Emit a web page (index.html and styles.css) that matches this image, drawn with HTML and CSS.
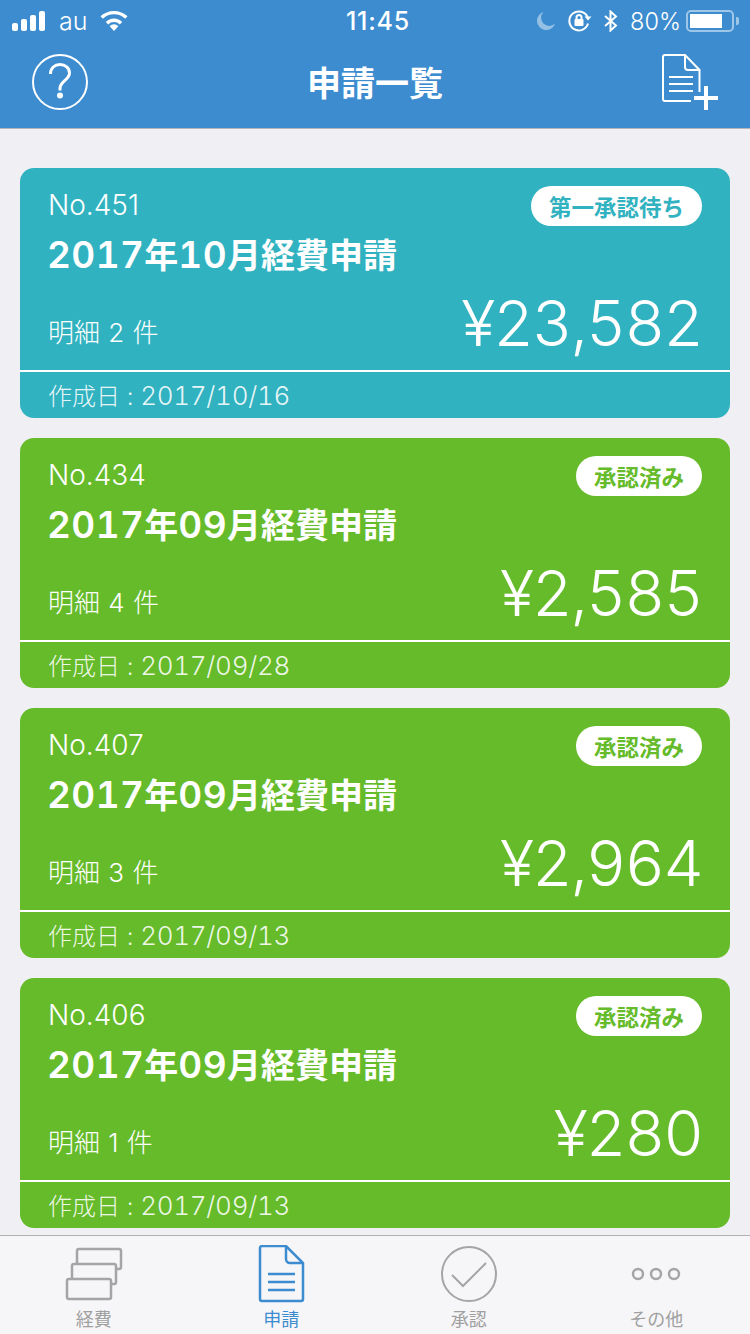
FILE: index.html
```html
<!DOCTYPE html>
<html lang="ja">
<head>
<meta charset="UTF-8">
<meta name="viewport" content="width=device-width, initial-scale=1.0">
<title>申請一覧</title>
<link rel="stylesheet" href="styles.css">
</head>
<body>

<div class="app">
  <header class="header">
    <div class="statusbar">
      <div class="status-left">
        <svg class="signal" width="34" height="20" viewBox="0 0 34 20">
          <rect x="0" y="12" width="6" height="8" rx="2"/>
          <rect x="9" y="8" width="6" height="12" rx="2"/>
          <rect x="18" y="4" width="6" height="16" rx="2"/>
          <rect x="27" y="0" width="6" height="20" rx="2"/>
        </svg>
        <span class="carrier">au</span>
        <svg class="wifi" width="28" height="20" viewBox="0 0 28 20">
          <path d="M14 20l-4.400-4.800a6.200 6.200 0 0 1 8.800 0z"/>
          <path d="M14 7.600c3.200 0 6.100 1.300 8.200 3.300l-2.400 2.500a8.400 8.400 0 0 0-11.600 0l-2.400-2.500c2.100-2 5-3.300 8.200-3.300z"/>
          <path d="M14 0c5.200 0 10 2 13.500 5.300l-2.400 2.500a16 16 0 0 0-22.200 0l-2.400-2.500c3.500-3.300 8.300-5.300 13.500-5.300z"/>
        </svg>
      </div>
      <div class="status-time">11:45</div>
      <div class="status-right">
        <svg class="moon" width="18" height="18" viewBox="0 0 18 18">
          <path d="M6.500 0a8 8 0 0 0 11.500 11.500a9.200 9.200 0 1 1-11.500-11.500z"/>
        </svg>
        <svg class="rotlock" width="24" height="22" viewBox="0 0 24 22">
          <path class="rot-arc" d="M20 13.500a9.500 9.500 0 1 1-.3-6"/>
          <path d="M23.500 6.500l-3.500 4-3.500-4z"/>
          <rect x="6.500" y="9" width="9" height="7" rx="1"/>
          <path class="rot-arc" d="M8.500 9v-1.500a2.500 2.500 0 0 1 5 0v1.500"/>
        </svg>
        <svg class="bluetooth" width="14" height="22" viewBox="0 0 14 22">
          <path d="M1 6l11 9.500-5.500 5v-19l5.500 5-11 9.500"/>
        </svg>
        <span class="battery-pct">80%</span>
        <div class="battery"><div class="battery-fill"></div></div>
        <div class="battery-nub"></div>
      </div>
    </div>

    <nav class="navbar">
      <svg class="nav-icon" width="56" height="56" viewBox="0 0 56 56">
        <circle class="line" cx="28" cy="28" r="27"/>
        <path class="line thick" d="M18.500 20c0-6 4.200-9.500 9.500-9.500s9.500 3.500 9.500 8.500c0 7-8.800 7.500-9.500 15v2.500"/>
        <circle cx="28" cy="41.500" r="3"/>
      </svg>
      <h1 class="nav-title">申請一覧</h1>
      <svg class="nav-icon" width="56" height="56" viewBox="0 0 56 56">
        <path class="line" d="M29 47h-26a2 2 0 0 1-2-2v-42a2 2 0 0 1 2-2h20l14.500 15v22"/>
        <path class="line" d="M23 1v12a3 3 0 0 0 3 3h11.500"/>
        <path class="line" d="M7 23h24M7 30h24M7 37h24"/>
        <path class="line plus" d="M32 44h24M44 32v24"/>
      </svg>
    </nav>
  </header>

  <main class="list">
    <section class="card card-waiting">
      <div class="card-main">
        <div class="card-head">
          <span class="card-no">No.451</span>
          <span class="badge">第一承認待ち</span>
        </div>
        <h2 class="card-title"><span class="num">2017</span>年<span class="num">10</span>月経費申請</h2>
        <div class="card-row">
          <span class="card-count">明細 2 件</span>
          <span class="card-amount">¥23,582</span>
        </div>
      </div>
      <div class="card-foot">作成日 : <span class="date">2017/10/16</span></div>
    </section>

    <section class="card card-done">
      <div class="card-main">
        <div class="card-head">
          <span class="card-no">No.434</span>
          <span class="badge">承認済み</span>
        </div>
        <h2 class="card-title"><span class="num">2017</span>年<span class="num">09</span>月経費申請</h2>
        <div class="card-row">
          <span class="card-count">明細 4 件</span>
          <span class="card-amount">¥2,585</span>
        </div>
      </div>
      <div class="card-foot">作成日 : <span class="date">2017/09/28</span></div>
    </section>

    <section class="card card-done">
      <div class="card-main">
        <div class="card-head">
          <span class="card-no">No.407</span>
          <span class="badge">承認済み</span>
        </div>
        <h2 class="card-title"><span class="num">2017</span>年<span class="num">09</span>月経費申請</h2>
        <div class="card-row">
          <span class="card-count">明細 3 件</span>
          <span class="card-amount">¥2,964</span>
        </div>
      </div>
      <div class="card-foot">作成日 : <span class="date">2017/09/13</span></div>
    </section>

    <section class="card card-done">
      <div class="card-main">
        <div class="card-head">
          <span class="card-no">No.406</span>
          <span class="badge">承認済み</span>
        </div>
        <h2 class="card-title"><span class="num">2017</span>年<span class="num">09</span>月経費申請</h2>
        <div class="card-row">
          <span class="card-count">明細 1 件</span>
          <span class="card-amount">¥280</span>
        </div>
      </div>
      <div class="card-foot">作成日 : <span class="date">2017/09/13</span></div>
    </section>
  </main>

  <footer class="tabbar">
    <a class="tab">
      <svg class="tab-stack" width="58" height="58" viewBox="0 0 58 58">
        <rect x="12" y="4" width="44" height="20" rx="2"/>
        <rect x="7" y="19" width="44" height="20" rx="2"/>
        <rect x="2" y="34" width="44" height="20" rx="2"/>
      </svg>
      <span>経費</span>
    </a>
    <a class="tab tab-active">
      <svg width="58" height="58" viewBox="0 0 58 58">
        <path d="M10 1h24l17 17v36a2 2 0 0 1-2 2h-39a2 2 0 0 1-2-2v-51a2 2 0 0 1 2-2z"/>
        <path d="M34 1v13a4 4 0 0 0 4 4h13"/>
        <path d="M16 29h27M16 37h27M16 45h27"/>
      </svg>
      <span>申請</span>
    </a>
    <a class="tab">
      <svg class="tab-thin" width="58" height="58" viewBox="0 0 58 58">
        <circle cx="29" cy="29" r="27"/>
        <path d="M12 30l11 11 23-23"/>
      </svg>
      <span>承認</span>
    </a>
    <a class="tab">
      <svg width="58" height="58" viewBox="0 0 58 58">
        <circle cx="11" cy="29" r="5"/>
        <circle cx="29" cy="29" r="5"/>
        <circle cx="47" cy="29" r="5"/>
      </svg>
      <span>その他</span>
    </a>
  </footer>
</div>

</body>
</html>
```

FILE: styles.css
```css
/* Page */
body {
  margin: 0;
  padding: 0;
  background-color: #efeff4;
  font-family: Inter, "Noto Sans CJK JP", sans-serif;
  color: #fff;
}
.app {
  display: flex;
  flex-direction: column;
  height: 1334px;
  overflow: hidden;
}

/* Blue header: status bar + title bar */
.header {
  height: 128px;
  flex: none;
  background-color: #3c8ccf;
  border-bottom: 1px solid #b5b5b8;
}
.statusbar {
  display: grid;
  grid-template-columns: 1fr auto 1fr;
  align-items: center;
  height: 42px;
  margin-bottom: -2px;
  font-size: 25px;
}
.status-left {
  display: flex;
  align-items: center;
  padding-left: 12px;
}
.signal, .wifi, .rotlock path, .rotlock rect, .moon {
  fill: #fff;
}
.carrier {
  margin-left: 13px;
  font-weight: 300;
}
.wifi {
  margin-left: 13px;
}
.status-time {
  padding-left: 6px;
  font-weight: 500;
  letter-spacing: 0.8px;
}
.status-right {
  display: flex;
  align-items: center;
  justify-content: flex-end;
  padding-right: 11px;
}
.moon {
  opacity: 0.45;
}
.rotlock {
  margin-left: 13px;
}
.rotlock .rot-arc {
  fill: none;
  stroke: #fff;
  stroke-width: 2;
}
.bluetooth {
  margin-left: 12px;
  fill: none;
  stroke: #fff;
  stroke-width: 2;
}
.battery-pct {
  margin-left: 12px;
  font-size: 23.500px;
  font-weight: 300;
}
.battery {
  box-sizing: border-box;
  width: 48px;
  height: 22px;
  margin-left: 5px;
  padding: 2px;
  border: 2px solid rgba(255, 255, 255, 0.5);
  border-radius: 5px;
}
.battery-fill {
  width: 32px;
  height: 100%;
  background-color: #fff;
}
.battery-nub {
  width: 3px;
  height: 8px;
  margin-left: 2px;
  background-color: rgba(255, 255, 255, 0.5);
  border-radius: 0 2px 2px 0;
}
.navbar {
  display: flex;
  align-items: center;
  justify-content: space-between;
  box-sizing: border-box;
  height: 88px;
  padding: 0 32px 4px;
}
.nav-title {
  margin: 0 0 2px;
  font-family: "Noto Sans CJK JP", sans-serif;
  font-size: 34px;
  font-weight: 700;
}
.nav-icon {
  fill: #fff;
  overflow: visible;
}
.nav-icon .line {
  fill: none;
  stroke: #fff;
  stroke-width: 2;
}
.nav-icon .thick {
  stroke-width: 3;
}
.nav-icon .plus {
  stroke-width: 4;
}

/* Request cards */
.list {
  flex: 1;
  display: flex;
  flex-direction: column;
  gap: 20px;
  padding: 39px 20px 0;
}
.card {
  height: 250px;
  border-radius: 14px;
  overflow: hidden;
}
.card-waiting {
  background-color: #31b2c0;
  --accent: #31b2c0;
}
.card-done {
  background-color: #66bb2a;
  --accent: #66bb2a;
}
.card-main {
  height: 202px;
  padding: 18px 28px 0;
  box-sizing: border-box;
}
.card-head {
  display: flex;
  align-items: center;
  justify-content: space-between;
  height: 40px;
}
.card-no {
  margin-bottom: 2px;
  font-size: 28px;
  font-weight: 300;
}
.badge {
  height: 40px;
  padding: 0 18px;
  border-radius: 20px;
  background-color: #fff;
  color: var(--accent);
  font-family: "Noto Sans CJK JP", sans-serif;
  font-size: 22.500px;
  font-weight: 700;
  line-height: 40px;
}
.card-title {
  height: 40px;
  margin: 9px 0 0 -1px;
  font-size: 34px;
  font-weight: 700;
  line-height: 40px;
}
.card-title .num {
  font-size: 37px;
  font-weight: 600;
  font-variant-numeric: tabular-nums;
  letter-spacing: 0.4px;
}
.card-row {
  display: flex;
  align-items: center;
  justify-content: space-between;
  height: 72px;
  margin-top: 13px;
}
.card-count {
  margin-top: 12px;
  font-size: 26px;
  font-weight: 300;
  word-spacing: 1px;
}
.card-amount {
  margin-bottom: 3px;
  font-size: 63px;
  font-weight: 300;
  font-variant-numeric: tabular-nums;
  letter-spacing: -2px;
  line-height: 72px;
}
.card-foot {
  height: 46px;
  border-top: 2px solid #fff;
  padding: 0 28px;
  font-size: 24px;
  font-weight: 300;
  line-height: 48px;
  color: rgba(255, 255, 255, 0.9);
}
.card-foot .date {
  font-size: 26px;
  font-variant-numeric: tabular-nums;
  letter-spacing: -0.3px;
}

/* Bottom tabs */
.tabbar {
  display: grid;
  grid-template-columns: repeat(4, 1fr);
  flex: none;
  height: 98px;
  background-color: #f6f6f8;
  border-top: 1px solid #b2b2b2;
}
.tab {
  display: flex;
  flex-direction: column;
  align-items: center;
  padding-top: 9px;
  color: #a0a0a0;
  font-family: "Noto Sans CJK JP", sans-serif;
  font-size: 18px;
  line-height: 30px;
}
.tab svg {
  fill: none;
  stroke: #a5a5a5;
  stroke-width: 2.500;
}
.tab .tab-stack {
  fill: #f6f6f8;
}
.tab .tab-thin {
  stroke-width: 2;
}
.tab-active {
  color: #3c8ccf;
}
.tab-active svg {
  stroke: #3c8ccf;
}
```
